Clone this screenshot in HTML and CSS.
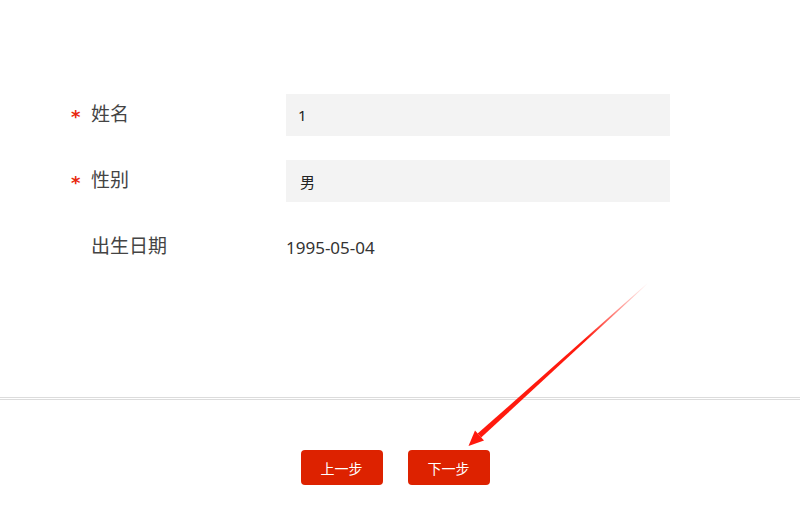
FILE: index.html
```html
<!DOCTYPE html>
<html lang="zh-CN">
<head>
    <meta charset="UTF-8">
    <meta name="viewport" content="width=device-width, initial-scale=1.0">
    <title>基本信息</title>
    <link rel="stylesheet" href="styles.css">
</head>
<body>
    <div class="page">
        <div class="form">
            <div class="form-row">
                <label class="form-label required">姓名</label>
                <div class="form-field input-box">1</div>
            </div>
            <div class="form-row">
                <label class="form-label required">性别</label>
                <div class="form-field input-box gender">男</div>
            </div>
            <div class="form-row">
                <label class="form-label">出生日期</label>
                <div class="form-field plain">1995-05-04</div>
            </div>
        </div>

        <div class="footer">
            <button type="button" class="btn">上一步</button>
            <button type="button" class="btn">下一步</button>
        </div>

        <!-- annotation arrow -->
        <svg class="arrow" width="800" height="511" viewBox="0 0 800 511">
            <defs>
                <linearGradient id="fade" x1="469" y1="445" x2="648" y2="283" gradientUnits="userSpaceOnUse">
                    <stop offset="0" stop-color="#ff1a0e"/>
                    <stop offset="0.65" stop-color="#ff1a0e"/>
                    <stop offset="1" stop-color="#ff1a0e" stop-opacity="0"/>
                </linearGradient>
            </defs>
            <polygon points="481.2,437.6 477.6,433.6 647.8,282.8 648.2,283.2" fill="url(#fade)"/>
            <polygon points="468.5,446 475,430.5 484,440.5" fill="#ff1a0e"/>
        </svg>
    </div>
</body>
</html>
```

FILE: styles.css
```css
html, body {
    margin: 0;
    padding: 0;
    background: #fff;
}
body {
    font-family: "Noto Sans", "Noto Sans CJK SC", sans-serif;
    color: #333;
}
.page {
    position: relative;
    width: 800px;
    height: 511px;
    overflow: hidden;
}
.form {
    padding: 94px 0 0 70px;
    height: 397px;
    box-sizing: border-box;
    display: flex;
    flex-direction: column;
    gap: 24px;
}
.form-row {
    display: flex;
    align-items: center;
    height: 42px;
}
.form-label {
    width: 216px;
    padding-left: 21px;
    box-sizing: border-box;
    font-size: 19px;
    line-height: 26px;
    margin-top: -2px;
    color: #444;
    position: relative;
}
.form-label.required::before {
    content: "*";
    position: absolute;
    left: 1px;
    top: 3px;
    color: #e8280f;
    font-size: 18px;
    font-weight: bold;
    font-family: "DejaVu Sans", sans-serif;
}
.form-field {
    width: 384px;
    height: 42px;
    box-sizing: border-box;
    display: flex;
    align-items: center;
    font-size: 15px;
    color: #222;
}
.input-box {
    background: #f3f3f3;
    padding-left: 12px;
}
.input-box.gender {
    padding-left: 14px;
}
.plain {
    font-size: 17px;
    color: #333;
}
.footer {
    border-top: 3px double #dcdcdc;
    display: flex;
    justify-content: center;
    gap: 25px;
    padding: 50px 10px 0 0;
}
.btn {
    width: 82px;
    height: 35px;
    border: none;
    border-radius: 4px;
    background: #dd2200;
    color: #fff;
    font-family: "Noto Sans CJK SC", sans-serif;
    font-size: 14px;
    cursor: pointer;
}
.arrow {
    position: absolute;
    left: 0;
    top: 0;
    pointer-events: none;
}
```
